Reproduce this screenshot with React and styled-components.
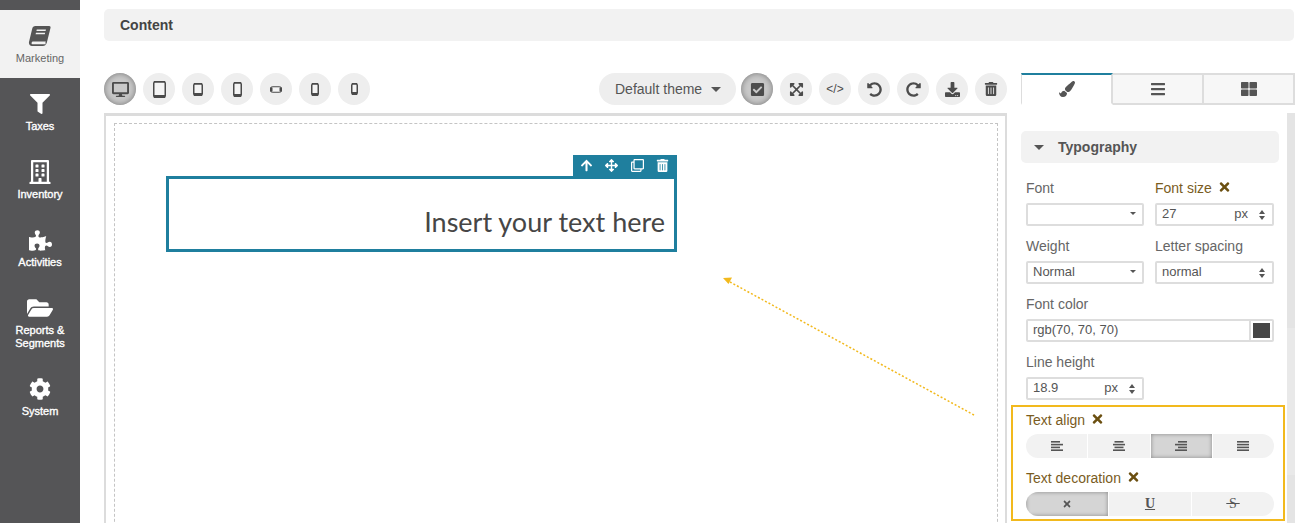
import React from 'react';
import styled, { createGlobalStyle } from 'styled-components';
import {
  FaFilter, FaRegBuilding, FaPuzzlePiece, FaFolderOpen, FaCog, FaDesktop,
  FaCheckSquare, FaExpandArrowsAlt, FaUndoAlt, FaRedoAlt, FaDownload, FaTrashAlt, FaPaintBrush, FaBars,
  FaThLarge, FaTimes, FaArrowUp, FaArrowsAlt, FaRegClone,
} from 'react-icons/fa';

const Global = createGlobalStyle`
  html, body { margin: 0; padding: 0; background: #fff; overflow: hidden; }
  body { font-family: "Liberation Sans", Arial, sans-serif; color: #555; }
`;

const Page = styled.div`
  position: relative;
  display: grid;
  grid-template-columns: 80px 1fr;
  width: 1306px;
  height: 523px;
  overflow: hidden;
`;

const Sidebar = styled.nav`
  background: #555557;
  padding-top: 10px;
  display: flex;
  flex-direction: column;
`;

const NavItem = styled.div`
  display: flex;
  flex-direction: column;
  align-items: center;
  padding: 14px 0 13px;
  background: ${p => (p.$active ? '#f2f2f2' : 'transparent')};
  color: ${p => (p.$active ? '#666' : '#fff')};
  font-size: 11px;
  line-height: 13px;
  text-align: center;
  -webkit-text-stroke: ${p => (p.$active ? 0 : '0.35px')};
`;

const NavIcon = styled.span`
  height: 24px;
  margin-bottom: 4px;
  display: flex;
  align-items: center;
  justify-content: center;
  color: ${p => (p.$active ? '#555' : '#fff')};
`;

const Main = styled.main`
  padding: 9px 12px 0 24px;
  min-width: 0;
`;

const Header = styled.div`
  height: 32px;
  background: #f2f2f2;
  border-radius: 5px;
  padding-left: 16px;
  font-size: 14px;
  font-weight: 700;
  line-height: 32px;
  color: #444;
`;

const Workspace = styled.div`
  display: flex;
  gap: 14px;
  margin-top: 32px;
`;

const Editor = styled.section`
  width: 903px;
  flex: none;
`;

const Toolbar = styled.div`
  display: flex;
  justify-content: space-between;
  height: 32px;
`;

const ToolGroup = styled.div`
  display: flex;
  gap: 7px;
`;

const RoundButton = styled.button`
  width: 32px;
  height: 32px;
  border: 0;
  padding: 0;
  border-radius: 50%;
  display: flex;
  align-items: center;
  justify-content: center;
  background: ${p => (p.$on ? '#c9c9c9' : '#eeeeee')};
  color: #4c4c4c;
  box-shadow: ${p => (p.$on ? 'inset 0 0 6px #777' : 'none')};
  font: 12px "Liberation Sans", sans-serif;
`;

const ThemeSelect = styled.div`
  width: 137px;
  height: 32px;
  border-radius: 16px;
  background: #eeeeee;
  box-sizing: border-box;
  padding-left: 16px;
  margin-right: -2px;
  display: flex;
  align-items: center;
  font-size: 14px;
  color: #555;
`;

const Caret = styled.span`
  display: inline-block;
  margin-left: ${p => p.$ml || 0}px;
  margin-right: ${p => p.$mr || 0}px;
  border-left: ${p => p.$s || 5}px solid transparent;
  border-right: ${p => p.$s || 5}px solid transparent;
  border-top: ${p => p.$s || 5}px solid #555;
`;

const Canvas = styled.div`
  margin-top: 8px;
  height: 420px;
  box-sizing: border-box;
  border: 2px solid #dcdcdc;
  border-top-width: 3px;
  padding: 7px 7px 0 8px;
`;

const Dropzone = styled.div`
  height: 420px;
  border: 1px dashed #c4c4c4;
  padding: 52px 0 0 51px;
`;

const Block = styled.div`
  position: relative;
  width: 511px;
  height: 76px;
  box-sizing: border-box;
  border: 3px solid #1f7f9e;
  padding: 26px 9px 0 0;
  text-align: right;
  font-family: Lato, sans-serif;
  font-size: 27px;
  line-height: 33px;
  color: #464646;
`;

const BlockTools = styled.div`
  position: absolute;
  right: -3px;
  top: -24px;
  width: 104px;
  height: 21px;
  background: #1f7f9e;
  color: #fff;
  display: flex;
  align-items: center;
  justify-content: space-between;
  padding: 0 8px 0 7px;
  box-sizing: border-box;
  svg { width: 13px; height: 13px; }
`;

const Panel = styled.aside`
  width: 274px;
  flex: none;
`;

const Tabs = styled.div`
  display: flex;
  height: 32px;
`;

const Tab = styled.div`
  flex: ${p => (p.$on ? '0 0 92px' : '1')};
  box-sizing: border-box;
  display: flex;
  align-items: center;
  justify-content: center;
  color: #555;
  background: ${p => (p.$on ? '#fff' : '#f7f7f7')};
  border: 2px solid #ddd;
  border-left-width: ${p => (p.$first ? 1 : 0)}px;
  border-top-color: ${p => (p.$on ? '#1f7f9e' : '#ddd')};
  border-bottom-color: ${p => (p.$on ? '#fff' : '#ddd')};
  svg { width: 16px; height: 16px; }
`;

const PanelBody = styled.div`
  display: flex;
  gap: 8px;
  margin-top: 8px;
`;

const Scroll = styled.div`
  width: 8px;
  height: 420px;
  flex: none;
  background: linear-gradient(#e4e4e4 0 215px, #e9e9e9 215px 362px, #e4e4e4 362px);
`;

const Props = styled.div`
  width: 258px;
  flex: none;
  padding-top: 18px;
`;

const SectionHead = styled.div`
  height: 32px;
  background: #f2f2f2;
  border-radius: 5px;
  display: flex;
  align-items: center;
  padding-left: 13px;
  font-size: 14px;
  font-weight: 700;
  color: #555;
`;

const SectionTitle = styled.span`
  margin-left: 14px;
`;

const Fields = styled.div`
  display: grid;
  grid-template-columns: 118px 119px;
  column-gap: 11px;
  padding: 18px 0 0 5px;
  row-gap: 13px;
`;

const Field = styled.div`
  grid-column: ${p => (p.$wide ? '1 / span 2' : 'auto')};
`;

const Label = styled.div`
  height: 15px;
  font-size: 14px;
  line-height: 15px;
  color: ${p => (p.$set ? '#7a5c1e' : '#666')};
  display: flex;
  align-items: center;
  gap: 6px;
  margin-bottom: 7px;
  white-space: nowrap;
  svg { width: 13px; height: 14px; color: #6b4f10; margin-top: -4px; }
`;

const Input = styled.div`
  height: 23px;
  box-sizing: border-box;
  border: 2px solid #ddd;
  border-radius: 2px;
  display: flex;
  align-items: center;
  padding: 0 0 2px 5px;
  font-size: 13px;
  color: #555;
  background: #fff;
`;

const InputValue = styled.span`
  flex: 1;
`;

const Unit = styled.span`
  margin-right: 11px;
`;

const Stepper = styled.span`
  display: flex;
  flex-direction: column;
  gap: 2px;
  margin-right: 7px;
  margin-top: 2px;
`;

const StepUp = styled.span`
  border-left: 3.5px solid transparent;
  border-right: 3.5px solid transparent;
  border-bottom: 4px solid #555;
`;

const StepDown = styled.span`
  border-left: 3.5px solid transparent;
  border-right: 3.5px solid transparent;
  border-top: 4px solid #555;
`;

const Swatch = styled.span`
  align-self: stretch;
  width: 23px;
  margin-bottom: -2px;
  border-left: 2px solid #ddd;
  padding: 2px;
  box-sizing: border-box;
  &::after { content: ''; display: block; width: 17px; height: 15px; background: #464646; }
`;

const Highlight = styled.div`
  margin: 5px -6px 0 -10px;
  height: 116px;
  box-sizing: border-box;
  border: 2px solid #f2b91d;
  padding: 6px 9px 0 13px;
`;

const Segments = styled.div`
  display: flex;
  gap: 1px;
  height: 24px;
  border-radius: 12px;
  overflow: hidden;
  margin: -1px 0 13px;
`;

const Segment = styled.div`
  flex: 1;
  display: flex;
  align-items: center;
  justify-content: center;
  color: #555;
  background: ${p => (p.$on ? '#d5d5d5' : '#f2f2f2')};
  box-shadow: ${p => (p.$on ? 'inset 0 0 4px #888' : 'none')};
`;

const Glyph = styled.span`
  font-family: "Liberation Serif", serif;
  font-weight: ${p => p.$weight};
  font-size: 14px;
  line-height: 14px;
  color: #555;
  white-space: pre;
  text-decoration: ${p => p.$line};
`;

const Arrow = styled.svg`
  position: absolute;
  left: 0;
  top: 0;
  pointer-events: none;
`;

const BookIcon = () => (
  <svg width="24" height="22" viewBox="0 0 26 24" fill="none">
    <path fill="currentColor" d="M8 1h15c1.200 0 1.800 1 1.500 2l-4 16c-.5 2-2 4-4.500 4H5c-2.700 0-4.500-2-4-4.500L4.500 4C5 2 6 1 8 1z" />
    <path fill="#f2f2f2" d="M9.500 5h10l-.4 1.600h-10zM8.600 8.500h10l-.4 1.600h-10zM3.800 19.500c.2-1 1-1.500 2-1.500h13.500c-.5 1-.5 2 0 3H5.500c-1.300 0-1.900-.6-1.700-1.500z" />
  </svg>
);

const DeviceIcon = ({ w, h, landscape }) => (
  <svg width={w} height={h} viewBox={`0 0 ${w} ${h}`} fill="none">
    <rect x="0.75" y="0.75" width={w - 1.5} height={h - 1.5} rx="1.5" stroke="#4a4a4a" strokeWidth={landscape ? 1 : 1.5} fill="#f4f4f4" />
    {landscape ? (
      <path d={`M0 1.500h2.500v${h - 3}H0zM${w - 2.500} 1.500H${w}v${h - 3}h-2.500z`} fill="#4a4a4a" />
    ) : (
      <path d={`M1 ${h - 3}h${w - 2}v3H1zM1 0h${w - 2}v1.500H1z`} fill="#4a4a4a" />
    )}
  </svg>
);

const AlignIcon = ({ mode }) => {
  const x = { left: 0, center: 1.5, right: 3, justify: 0 }[mode];
  const shortWidth = mode === 'justify' ? 12 : 9;
  return (
    <svg width="12" height="10" viewBox="0 0 12 10" fill="currentColor">
      <rect x={x} y="0" width={shortWidth} height="1.600" />
      <rect x="0" y="2.800" width="12" height="1.600" />
      <rect x={x} y="5.600" width={shortWidth} height="1.600" />
      <rect x="0" y="8.400" width="12" height="1.600" />
    </svg>
  );
};

const devices = [[13, 17], [10, 13], [9, 15], [12, 7, true], [8, 13], [7, 12]];

const nav = [
  [<FaFilter size={20} />, 'Taxes'],
  [<FaRegBuilding size={24} />, 'Inventory'],
  [<FaPuzzlePiece size={23} />, 'Activities'],
  [<FaFolderOpen size={26} />, <>Reports &amp;<br />Segments</>],
  [<FaCog size={22} />, 'System'],
];

const Steps = () => <Stepper><StepUp /><StepDown /></Stepper>;

export default function App() {
  return (
    <Page>
      <Global />
      <Sidebar>
        <NavItem $active><NavIcon $active><BookIcon /></NavIcon>Marketing</NavItem>
        {nav.map(([icon, label], i) => <NavItem key={i}><NavIcon>{icon}</NavIcon>{label}</NavItem>)}
      </Sidebar>
      <Main>
        <Header>Content</Header>
        <Workspace>
          <Editor>
            <Toolbar>
              <ToolGroup>
                <RoundButton $on><FaDesktop size={17} /></RoundButton>
                {devices.map(([w, h, landscape], i) => (
                  <RoundButton key={i}><DeviceIcon w={w} h={h} landscape={landscape} /></RoundButton>
                ))}
              </ToolGroup>
              <ToolGroup>
                <ThemeSelect>Default theme<Caret $ml={9} /></ThemeSelect>
                <RoundButton $on><FaCheckSquare size={15} /></RoundButton>
                <RoundButton><FaExpandArrowsAlt size={15} /></RoundButton>
                <RoundButton>&lt;/&gt;</RoundButton>
                <RoundButton><FaUndoAlt size={15} /></RoundButton>
                <RoundButton><FaRedoAlt size={15} /></RoundButton>
                <RoundButton><FaDownload size={15} /></RoundButton>
                <RoundButton><FaTrashAlt size={14} /></RoundButton>
              </ToolGroup>
            </Toolbar>
            <Canvas>
              <Dropzone>
                <Block>
                  <BlockTools><FaArrowUp /><FaArrowsAlt /><FaRegClone /><FaTrashAlt /></BlockTools>
                  Insert your text here
                </Block>
              </Dropzone>
            </Canvas>
          </Editor>
          <Panel>
            <Tabs>
              <Tab $on $first><FaPaintBrush /></Tab>
              <Tab><FaBars /></Tab>
              <Tab><FaThLarge /></Tab>
            </Tabs>
            <PanelBody>
              <Props>
                <SectionHead><Caret $s={5} /><SectionTitle>Typography</SectionTitle></SectionHead>
                <Fields>
                  <Field><Label>Font</Label><Input><InputValue /><Caret $s={3.5} $mr={6} /></Input></Field>
                  <Field><Label $set>Font size<FaTimes /></Label><Input><InputValue>27</InputValue><Unit>px</Unit><Steps /></Input></Field>
                  <Field><Label>Weight</Label><Input><InputValue>Normal</InputValue><Caret $s={3.5} $mr={6} /></Input></Field>
                  <Field><Label>Letter spacing</Label><Input><InputValue>normal</InputValue><Steps /></Input></Field>
                  <Field $wide><Label>Font color</Label><Input><InputValue>rgb(70, 70, 70)</InputValue><Swatch /></Input></Field>
                  <Field><Label>Line height</Label><Input><InputValue>18.9</InputValue><Unit>px</Unit><Steps /></Input></Field>
                </Fields>
                <Highlight>
                  <Label $set>Text align<FaTimes /></Label>
                  <Segments>
                    <Segment><AlignIcon mode="left" /></Segment>
                    <Segment><AlignIcon mode="center" /></Segment>
                    <Segment $on><AlignIcon mode="right" /></Segment>
                    <Segment><AlignIcon mode="justify" /></Segment>
                  </Segments>
                  <Label $set>Text decoration<FaTimes /></Label>
                  <Segments>
                    <Segment $on><FaTimes size={10} /></Segment>
                    <Segment><Glyph $weight={700} $line="underline">U</Glyph></Segment>
                    <Segment><Glyph $weight={400} $line="line-through">{'\u2009S\u2009'}</Glyph></Segment>
                  </Segments>
                </Highlight>
              </Props>
              <Scroll />
            </PanelBody>
          </Panel>
        </Workspace>
      </Main>
      <Arrow width="1306" height="523">
        <line x1="974" y1="415" x2="730" y2="282" stroke="#f2b91d" strokeWidth="1.5" strokeDasharray="2 2" />
        <path d="M723 278l9-.5-3.500 6.500z" fill="#f2b91d" />
      </Arrow>
    </Page>
  );
}
